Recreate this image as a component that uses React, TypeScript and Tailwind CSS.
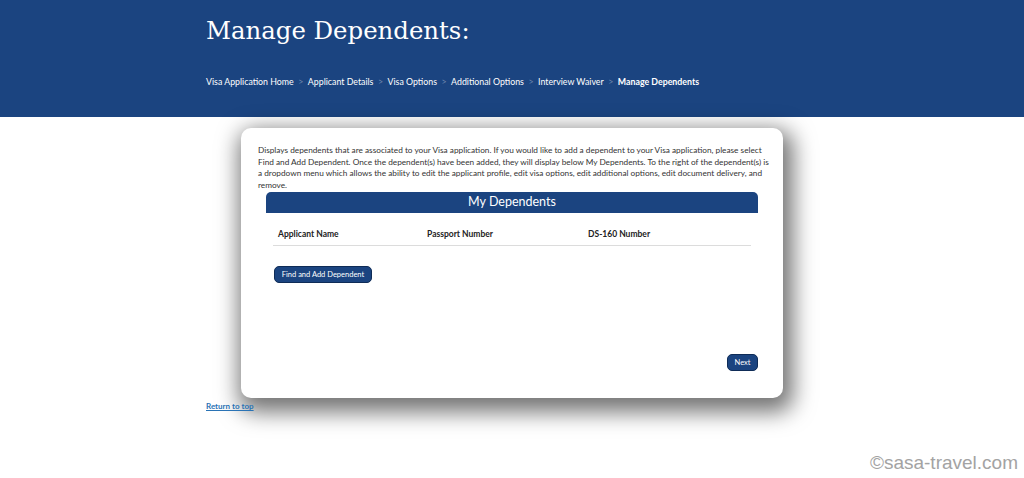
import React from "react"

const crumbs = [
  "Visa Application Home",
  "Applicant Details",
  "Visa Options",
  "Additional Options",
  "Interview Waiver",
]

const intro = [
  "Displays dependents that are associated to your Visa application. If you would like to add a dependent to your Visa application, please select",
  "Find and Add Dependent. Once the dependent(s) have been added, they will display below My Dependents. To the right of the dependent(s) is",
  "a dropdown menu which allows the ability to edit the applicant profile, edit visa options, edit additional options, edit document delivery, and",
  "remove.",
]

export default function App() {
  return (
    <div className="relative min-h-[478px] bg-white" style={{ fontFamily: "Lato, 'Open Sans', sans-serif" }}>
      {/* Header */}
      <header className="h-[117px] bg-[#1b4480]">
        <div className="mx-auto w-[612px] pt-[11px]">
          <h1 className="text-[24.4px] leading-[40px] text-white" style={{ fontFamily: "'DejaVu Serif', 'Liberation Serif', serif" }}>
            Manage Dependents:
          </h1>
          <nav className="mt-[24px] flex items-center text-[8.8px] text-white">
            {crumbs.map((c) => (
              <span key={c} className="flex items-center">
                <span>{c}</span>
                <span className="mx-[4.5px] text-[#6f86ad]">&gt;</span>
              </span>
            ))}
            <span className="font-bold">Manage Dependents</span>
          </nav>
        </div>
      </header>

      <main className="mx-auto w-[612px] pt-[11px]">
        {/* Card */}
        <div className="mx-auto flex h-[270px] w-[542px] flex-col rounded-[10px] bg-white px-[25px] pb-[27px] pt-[17px] shadow-[4px_8px_22px_6px_rgba(0,0,0,0.55)]">
          <div className="-mx-[8px] text-[8.25px] leading-[11.7px] text-[#333]">
            {intro.map((l) => (
              <div key={l} className="whitespace-nowrap">{l}</div>
            ))}
          </div>

          <div className="flex h-[21px] items-center justify-center rounded-t-[5px] bg-[#1b4480] text-[12.5px] text-white">
            My Dependents
          </div>

          <div className="mx-[7px] mt-[15px] flex border-b border-[#dcdcdc] pb-[4px] text-[8.5px] font-bold text-[#222]">
            <div className="w-[149px] pl-[5px]">Applicant Name</div>
            <div className="w-[161px] pl-[5px]">Passport Number</div>
            <div className="pl-[5px]">DS-160 Number</div>
          </div>

          <div className="mt-[13px] pl-[8px]">
            <button className="h-[17px] w-[98px] rounded-[5px] border border-[#0f2c57] bg-[#1b4480] text-[7.5px] text-white">
              Find and Add Dependent
            </button>
          </div>

          <div className="mt-auto flex justify-end">
            <button className="h-[17px] w-[31px] rounded-[5px] border border-[#0f2c57] bg-[#1b4480] text-[7.5px] text-white">
              Next
            </button>
          </div>
        </div>

        <a href="#" className="mt-[2px] block text-[8px] font-bold text-[#2a73b5] underline">
          Return to top
        </a>
      </main>

      <div className="absolute bottom-[1px] right-[6px] text-[19px] text-[#a3a3a3]" style={{ fontFamily: "'Liberation Sans', Arial, sans-serif" }}>
        ©sasa-travel.com
      </div>
    </div>
  )
}
